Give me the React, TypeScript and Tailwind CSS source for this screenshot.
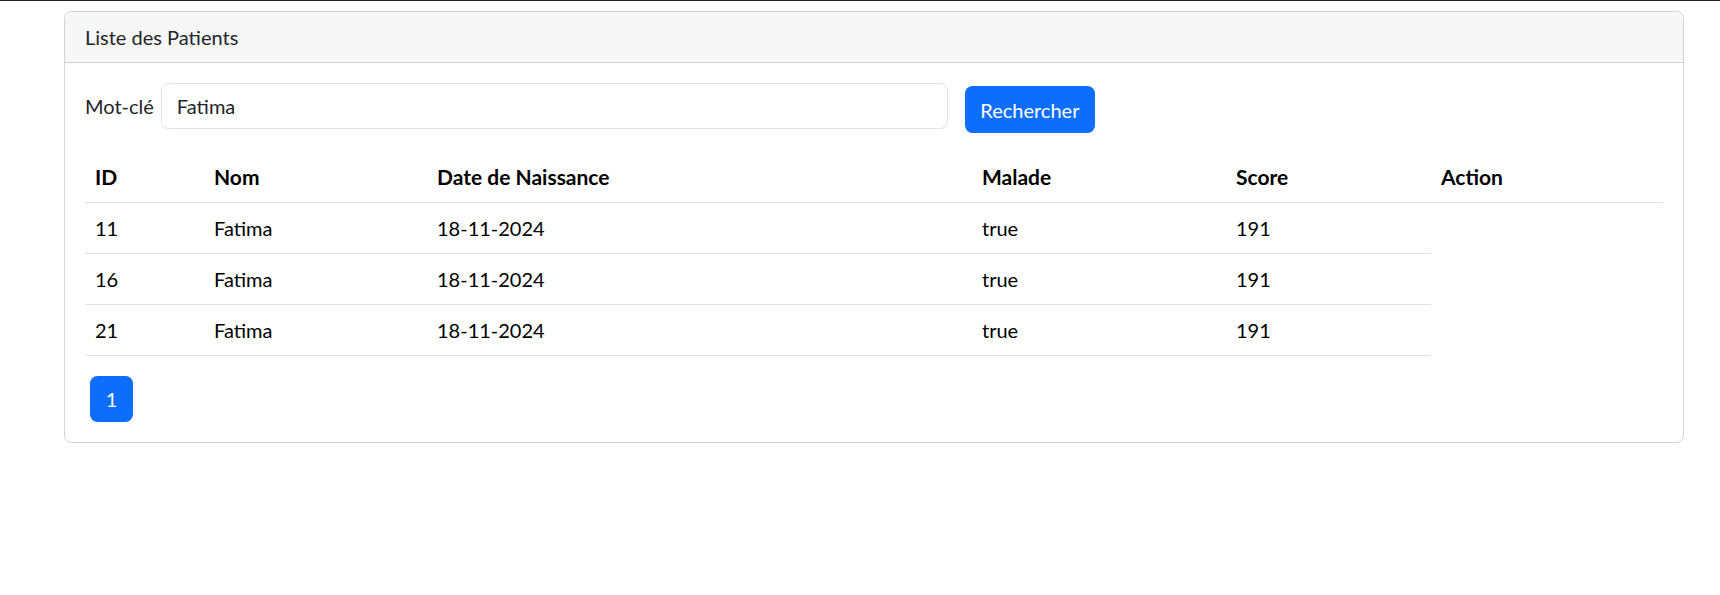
import React from "react";

const rows = [
  { id: 11, nom: "Fatima", date: "18-11-2024", malade: "true", score: 191 },
  { id: 16, nom: "Fatima", date: "18-11-2024", malade: "true", score: 191 },
  { id: 21, nom: "Fatima", date: "18-11-2024", malade: "true", score: 191 },
];

export default function App() {
  return (
    <div
      className="min-h-[595px] bg-white text-[#212529] text-[20px] leading-[30px]"
      style={{ fontFamily: 'Lato, "Noto Sans", sans-serif' }}
    >
      <div className="h-px bg-[#212529]" />
      <div className="ml-[64px] mt-[10px] w-[1620px] rounded-[7.5px] border border-[#d3d3d4]">
        <div className="h-[51px] rounded-t-[7.5px] border-b border-[#d3d3d4] bg-[#f7f7f7] px-[20px] py-[10px]">
          Liste des Patients
        </div>
        <div className="p-[20px]">
          <div className="flex items-start">
            <label className="mr-[7px] mt-[8px]">Mot-clé</label>
            <div className="flex h-[46px] w-[787px] items-center rounded-[7.5px] border border-[#dee2e6] px-[15px]">
              Fatima
            </div>
            <button className="ml-[17px] mt-[3px] h-[47px] w-[130px] rounded-[7.5px] bg-[#0d6efd] text-white">
              Rechercher
            </button>
          </div>
          <table className="mt-[19px] w-[1578px] table-fixed border-collapse text-left text-black">
            <colgroup>
              <col className="w-[119px]" />
              <col className="w-[223px]" />
              <col className="w-[545px]" />
              <col className="w-[254px]" />
              <col className="w-[205px]" />
              <col className="w-[232px]" />
            </colgroup>
            <thead>
              <tr>
                {["ID", "Nom", "Date de Naissance", "Malade", "Score", "Action"].map((h) => (
                  <th key={h} className="border-b border-[#dee2e6] p-[10px] text-[21px] font-bold">
                    {h}
                  </th>
                ))}
              </tr>
            </thead>
            <tbody>
              {rows.map((r) => (
                <tr key={r.id}>
                  <td className="border-b border-[#dee2e6] p-[10px]">{r.id}</td>
                  <td className="border-b border-[#dee2e6] p-[10px]">{r.nom}</td>
                  <td className="border-b border-[#dee2e6] p-[10px]">{r.date}</td>
                  <td className="border-b border-[#dee2e6] p-[10px]">{r.malade}</td>
                  <td className="border-b border-[#dee2e6] p-[10px]">{r.score}</td>
                </tr>
              ))}
            </tbody>
          </table>
          <div className="mt-[20px] flex">
            <button className="ml-[5px] h-[46px] w-[43px] rounded-[7.5px] bg-[#0d6efd] text-white">
              1
            </button>
          </div>
        </div>
      </div>
    </div>
  );
}
